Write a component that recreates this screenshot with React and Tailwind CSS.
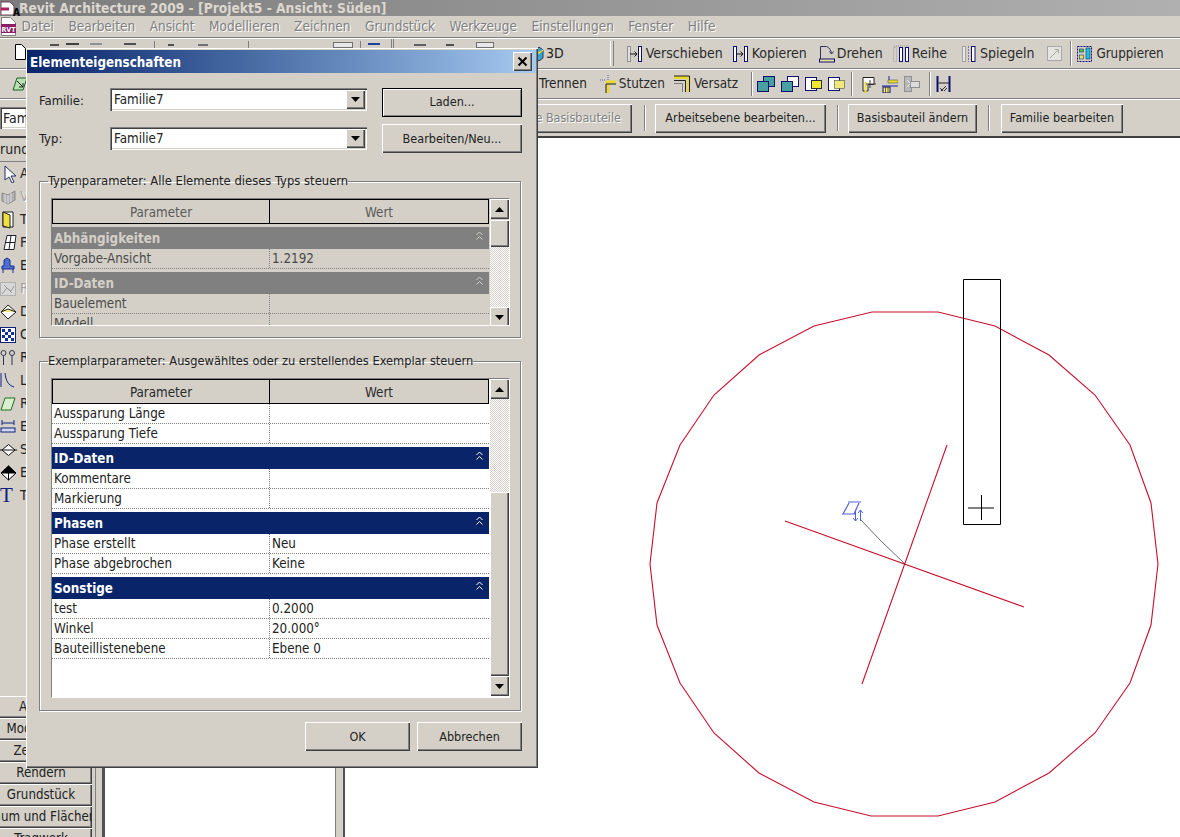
import React from 'react';

const raised = 'bg-[#d4d0c8] shadow-[inset_1px_1px_0_#fff,inset_-1px_-1px_0_#404040,inset_-2px_-2px_0_#808080]';
const sunken = 'shadow-[inset_1px_1px_0_#808080,inset_2px_2px_0_#404040,inset_-1px_-1px_0_#fff,inset_-2px_-2px_0_#d4d0c8]';
const ditherTrack = 'bg-[repeating-conic-gradient(#d4d0c8_0%_25%,#fff_0%_50%)] bg-[length:2px_2px]';

function Verschieben() {
  return (
    <svg width="15" height="18" viewBox="0 0 15 18" fill="none">
      <rect x="0.5" y="1.5" width="3" height="15" stroke="#909090" fill="#e0e0e0" />
      <rect x="11.5" y="1.5" width="3" height="15" stroke="#101070" fill="#fff" />
      <path d="M3 9h7M7.5 6.5 10 9l-2.5 2.5" stroke="#101010" />
    </svg>
  );
}

function Kopieren() {
  return (
    <svg width="15" height="18" viewBox="0 0 15 18" fill="none">
      <rect x="0.5" y="1.5" width="3" height="15" stroke="#101070" fill="#fff" />
      <rect x="11.5" y="1.5" width="3" height="15" stroke="#101070" fill="#fff" />
      <path d="M3 9h7M7.5 6.5 10 9l-2.5 2.5" stroke="#101010" />
    </svg>
  );
}

function Drehen() {
  return (
    <svg width="16" height="18" viewBox="0 0 16 18" fill="none">
      <path d="M1.5 14V1.5h6c3 1 4.500 4 5 7" stroke="#303060" />
      <path d="M10.500 6.500l2 2.500 2-2.500" stroke="#303060" />
      <rect x="0.5" y="14" width="15" height="3" fill="#e8e4a0" stroke="#101070" />
    </svg>
  );
}

function Reihe() {
  return (
    <svg width="17" height="18" viewBox="0 0 17 18" fill="none">
      <rect x="0.5" y="2.5" width="3" height="14" stroke="#a0a0a0" strokeDasharray="1 1" />
      <rect x="6.5" y="2.5" width="3" height="14" stroke="#101070" fill="#fff" />
      <rect x="12.5" y="2.5" width="3" height="14" stroke="#101070" fill="#fff" />
      <path d="M1 1h15" stroke="#909090" strokeDasharray="1 1" />
    </svg>
  );
}

function Spiegeln() {
  return (
    <svg width="14" height="18" viewBox="0 0 14 18" fill="none">
      <rect x="0.5" y="1.5" width="3" height="15" stroke="#a0a0a0" fill="#e8e8e8" />
      <path d="M6.5 1v16" stroke="#808080" strokeDasharray="2 1" />
      <rect x="9.5" y="1.5" width="3.5" height="15" stroke="#101070" fill="#fff" />
    </svg>
  );
}

function GrayBox() {
  return (
    <svg width="15" height="17" viewBox="0 0 15 17" fill="none">
      <rect x="0.5" y="1.5" width="14" height="14" stroke="#a8a8a8" fill="#e6e4de" />
      <path d="M3 13l8-8M7.5 4.500h4v4" stroke="#a8a8a8" />
    </svg>
  );
}

function Gruppieren() {
  return (
    <svg width="15" height="18" viewBox="0 0 15 18" fill="none">
      <rect x="0.5" y="1.5" width="14" height="15" stroke="#101070" strokeDasharray="2 1" />
      <rect x="9" y="3" width="4" height="11" fill="#20c0d8" stroke="#103070" strokeWidth="0.6" />
      <rect x="2.5" y="4" width="4" height="3" fill="#50c050" stroke="#103070" strokeWidth="0.6" />
      <rect x="2.5" y="10" width="4" height="4" fill="#e8e060" stroke="#103070" strokeWidth="0.6" />
    </svg>
  );
}

function Stutzen() {
  return (
    <svg width="16" height="18" viewBox="0 0 16 18" fill="none">
      <path d="M6 7h10M8 7v11" stroke="#e8d830" strokeWidth="3" />
      <path d="M0 5h6M8 0v5" stroke="#5060a0" strokeDasharray="1 1" />
      <path d="M6 9h10M6 9v9" stroke="#202020" />
    </svg>
  );
}

function Versatz() {
  return (
    <svg width="16" height="18" viewBox="0 0 16 18" fill="none">
      <path d="M0 2.500h14.500V17" stroke="#e8d830" strokeWidth="3" />
      <path d="M0 1h15.500v16M0 5.500h11.500V17" stroke="#202020" />
      <path d="M0 8.500h8.500V17" stroke="#808080" />
    </svg>
  );
}

function JoinA() {
  return (
    <svg width="18" height="18" viewBox="0 0 18 18" fill="none">
      <rect x="6.5" y="1.5" width="11" height="10" fill="#48a0a0" stroke="#101070" />
      <rect x="0.5" y="6.5" width="11" height="10" fill="#48a0a0" stroke="#101070" />
    </svg>
  );
}

function JoinB() {
  return (
    <svg width="18" height="18" viewBox="0 0 18 18" fill="none">
      <rect x="6.5" y="1.5" width="11" height="10" fill="#fff" stroke="#101070" />
      <rect x="0.5" y="6.5" width="11" height="10" fill="#48a0a0" stroke="#101070" />
    </svg>
  );
}

function Cut({ fill = '#f0e830', white }) {
  return (
    <svg width="17" height="18" viewBox="0 0 17 18" fill="none">
      <rect x="0.5" y="2.5" width="11" height="13" fill="#fff" stroke="#101070" />
      <rect x="6.5" y="5.5" width="10" height="8" fill={fill} stroke="#303030" strokeWidth={white ? 0.5 : 1} />
    </svg>
  );
}

function Corner() {
  return (
    <svg width="15" height="18" viewBox="0 0 15 18" fill="none">
      <path d="M2 16V2.500h11v7H7V16z" stroke="#202020" fill="#fff" />
      <path d="M4.500 18V7" stroke="#e8d830" strokeWidth="2" />
      <path d="M9 5v8M5 9h10" stroke="#404040" />
    </svg>
  );
}

function Ruler() {
  return (
    <svg width="16" height="18" viewBox="0 0 16 18" fill="none">
      <path d="M7 1v5" stroke="#2020a0" />
      <rect x="6" y="5" width="10" height="3" fill="#e8d830" stroke="#404040" strokeWidth="0.5" />
      <path d="M0 11h16" stroke="#2020a0" />
      <rect x="1" y="12" width="7" height="6" fill="#f0e860" stroke="#101070" />
      <path d="M3.500 12v6M6 12v6" stroke="#101070" strokeWidth="0.6" />
    </svg>
  );
}

function GrayCut() {
  return (
    <svg width="16" height="18" viewBox="0 0 16 18" fill="none">
      <rect x="0.5" y="1.5" width="7" height="15" fill="#b8b8b8" stroke="#909090" />
      <rect x="6.5" y="6.5" width="9" height="6" fill="#dcdcdc" stroke="#909090" />
      <path d="M3 5l3 3M3 12l3-3" stroke="#f0f0f0" />
    </svg>
  );
}

function Dimension() {
  return (
    <svg width="15" height="18" viewBox="0 0 15 18" fill="none">
      <path d="M1.500 1v16M13.500 1v16" stroke="#101070" strokeWidth="2" />
      <path d="M2 8h11" stroke="#202020" />
      <path d="M5 16l5-5M4 13l3 3M8 16l3-3" stroke="#303030" />
    </svg>
  );
}

function Tool({ children, letter, muted }) {
  return (
    <div className="flex h-[23px] items-center">
      <div className="flex w-[20px] justify-start">{children}</div>
      <span className={muted ? 'text-[#a0a0a0] [text-shadow:1px_1px_0_#fff]' : 'text-[#222]'}>{letter}</span>
    </div>
  );
}

function ToolItem({ icon, label, className = 'gap-[4px]' }) {
  return (
    <div className={`flex shrink-0 items-center text-[#2a2a2a] ${className}`}>
      {icon}
      <span>{label}</span>
    </div>
  );
}

function Arrow({ down }) {
  return (
    <svg width="9" height="5" viewBox="0 0 9 5">
      <path d={down ? 'M0 0h9L4.500 5z' : 'M0 5h9L4.500 0z'} fill="#000" />
    </svg>
  );
}

function ScrollButton({ down, className = '' }) {
  return (
    <div className={`flex h-[20px] shrink-0 items-center justify-center ${raised} ${className}`}>
      <Arrow down={down} />
    </div>
  );
}

function Chevrons({ color }) {
  return (
    <svg width="7" height="10" viewBox="0 0 7 10" fill="none" stroke={color}>
      <path d="M0.5 4 3.500 1l3 3M0.5 8.500l3-3 3 3" />
    </svg>
  );
}

function PropertyGrid({ dim, rows, className, scrollbar }) {
  return (
    <div className={`flex w-[459px] overflow-hidden border border-t-[#808080] border-l-[#808080] border-r-white border-b-white text-[13.3px] ${dim ? 'bg-[#d4d0c8]' : 'bg-white'} ${className}`}>
      <div className="w-[437px] shrink-0">
        <div className={`flex h-[25px] bg-[#d4d0c8] ${dim ? 'text-[#5a5a5a]' : 'text-[#2a2a2a]'}`}>
          <div className="flex w-[218px] items-center justify-center border border-black pt-[2px]">Parameter</div>
          <div className="flex flex-1 items-center justify-center border border-l-0 border-black pt-[2px]">Wert</div>
        </div>
        {rows.map((row, i) =>
          row.section ? (
            <div
              key={i}
              className={`mt-[3px] flex h-[22px] items-center justify-between pl-[2px] pr-[6px] pt-[2px] font-bold ${dim ? 'bg-[#808080] text-[#d4d0c8]' : 'bg-[#0a246a] text-white'}`}
            >
              <span>{row.section}</span>
              <span className="-mt-[7px]">
                <Chevrons color={dim ? '#d4d0c8' : '#fff'} />
              </span>
            </div>
          ) : (
            <div key={i} className={`flex h-[20px] items-center border-b border-dotted border-[#808080] ${dim ? 'text-[#4a4a4a]' : 'text-[#222]'}`}>
              <div className="flex h-full w-[218px] items-center border-r border-dotted border-[#808080] pl-[2px]">{row.name}</div>
              <div className="pl-[2px]">{row.value}</div>
            </div>
          )
        )}
      </div>
      <div className="flex w-[20px] shrink-0 flex-col pl-px">{scrollbar}</div>
    </div>
  );
}

const typeRows = [
  { section: 'Abhängigkeiten' },
  { name: 'Vorgabe-Ansicht', value: '1.2192' },
  { section: 'ID-Daten' },
  { name: 'Bauelement', value: '' },
  { name: 'Modell', value: '' },
];

const instanceRows = [
  { name: 'Aussparung Länge', value: '' },
  { name: 'Aussparung Tiefe', value: '' },
  { section: 'ID-Daten' },
  { name: 'Kommentare', value: '' },
  { name: 'Markierung', value: '' },
  { section: 'Phasen' },
  { name: 'Phase erstellt', value: 'Neu' },
  { name: 'Phase abgebrochen', value: 'Keine' },
  { section: 'Sonstige' },
  { name: 'test', value: '0.2000' },
  { name: 'Winkel', value: '20.000°' },
  { name: 'Bauteillistenebene', value: 'Ebene 0' },
];

const menu = ['Datei', 'Bearbeiten', 'Ansicht', 'Modellieren', 'Zeichnen', 'Grundstück', 'Werkzeuge', 'Einstellungen', 'Fenster', 'Hilfe'];
const tabs = ['Ansicht', 'Modellieren', 'Zeichnen', 'Rendern', 'Grundstück', 'Raum und Flächen', 'Tragwerk'];

function Combo({ value }) {
  return (
    <div className={`flex h-[23px] w-[257px] items-center justify-between bg-white pl-[4px] pr-[2px] text-[13.3px] ${sunken}`}>
      <span className="text-[#222]">{value}</span>
      <div className={`flex h-[19px] w-[19px] items-center justify-center ${raised}`}>
        <Arrow down />
      </div>
    </div>
  );
}

function Dialog() {
  return (
    <div className={`absolute left-[26px] top-[48px] flex h-[720px] w-[512px] flex-col pl-[1px] pr-[2px] pt-[2px] text-[13px] ${raised}`}>
      <div className="flex h-[23px] shrink-0 items-center justify-between bg-gradient-to-r from-[#0a246a] to-[#a6caf0] pl-[3px] pr-[4px]">
        <span className="pt-[2px] text-[13.300px] font-bold text-white">Elementeigenschaften</span>
        <div className={`flex h-[19px] w-[19px] items-center justify-center ${raised}`}>
          <svg width="11" height="11" viewBox="0 0 11 11" stroke="#000" strokeWidth="2">
            <path d="M1.500 1.500l8 8M9.500 1.500l-8 8" />
          </svg>
        </div>
      </div>

      <div className="flex flex-col pl-[12px] pt-[15px]">
        <div className="flex items-start">
          <span className="mt-[3px] w-[71px]">Familie:</span>
          <Combo value="Familie7" />
          <div className="ml-[15px] flex h-[29px] w-[140px] items-center justify-center border border-black bg-[#d4d0c8] text-[12.500px] shadow-[inset_1px_1px_0_#fff,inset_-1px_-1px_0_#808080]">Laden...</div>
        </div>
        <div className="mt-[7px] flex items-center">
          <span className="w-[71px]">Typ:</span>
          <Combo value="Familie7" />
          <div className={`ml-[15px] flex h-[29px] w-[140px] items-center justify-center pt-[2px] text-[12.500px] ${raised}`}>Bearbeiten/Neu...</div>
        </div>

        <fieldset className="mt-[20px] h-[165px] w-[482px] border border-[#808080] pl-[11px] pt-[9px] shadow-[1px_1px_0_#fff,inset_1px_1px_0_#fff]">
          <legend className="-ml-[3px] text-[12.900px] leading-[16px] text-[#222]">Typenparameter: Alle Elemente dieses Typs steuern</legend>
          <PropertyGrid
            dim
            rows={typeRows}
            className="h-[128px]"
            scrollbar={
              <>
                <ScrollButton />
                <div className={`mt-px h-[27px] shrink-0 ${raised}`} />
                <div className={`h-[60px] shrink-0 ${ditherTrack}`} />
                <ScrollButton down />
              </>
            }
          />
        </fieldset>

        <fieldset className="mt-[15px] h-[358px] w-[482px] border border-[#808080] pl-[11px] pt-[9px] shadow-[1px_1px_0_#fff,inset_1px_1px_0_#fff]">
          <legend className="-ml-[3px] text-[12.700px] leading-[16px] text-[#222]">Exemplarparameter: Ausgewähltes oder zu erstellendes Exemplar steuern</legend>
          <PropertyGrid
            rows={instanceRows}
            className="h-[320px]"
            scrollbar={
              <>
                <ScrollButton />
                <div className={`h-[93px] shrink-0 ${ditherTrack}`} />
                <div className={`h-[184px] shrink-0 ${raised}`} />
                <ScrollButton down />
              </>
            }
          />
        </fieldset>

        <div className="mt-[11px] flex w-[483px] justify-end gap-[7px] text-[12.500px]">
          <div className={`flex h-[29px] w-[105px] items-center justify-center pt-[2px] ${raised}`}>OK</div>
          <div className={`flex h-[29px] w-[105px] items-center justify-center pt-[2px] ${raised}`}>Abbrechen</div>
        </div>
      </div>
    </div>
  );
}

function Canvas() {
  return (
    <svg className="h-full w-full" viewBox="345 138 835 699" fill="none">
      <polygon
        points="872,312 938,312 995,326 1049,355 1095,395 1130,445 1151,503 1158,564 1151,625 1130,683 1095,733 1049,773 995,802 938,816 871,816 814,802 759,773 714,733 680,683 657,625 650,564 657,503 680,445 714,395 759,355 814,326"
        stroke="#c8102e"
        strokeWidth="1.1"
      />
      <path d="M785 521 1024 607M947 445 862 684" stroke="#c8102e" strokeWidth="1.1" />
      <path d="M861 520 881 541 905 564" stroke="#445" strokeWidth="0.8" />
      <path d="M963.500 279.500h37v245h-37zM968 508h26M981.500 495v25" stroke="#000" />
      <path d="M842 514h14M848 502h13M849 503l-6 11M859 503l-5 11" stroke="#5060e0" strokeWidth="1.2" />
      <path d="M855.500 510v11M853 518l2.500 3 2.500-3M860.500 521v-11M858 513l2.500-3 2.500 3" stroke="#5060e0" />
    </svg>
  );
}

export default function App() {
  return (
    <div className="relative flex h-[837px] w-[1180px] flex-col overflow-hidden bg-[#d4d0c8] font-['DejaVu_Sans_Condensed','Noto_Sans',sans-serif] text-[14px] text-[#222]">
      {/* title bar */}
      <div className="flex h-[16px] shrink-0 items-end overflow-hidden bg-gradient-to-r from-[#7c7c7c] to-[#b0b0b0]">
        <div className="relative mb-[1px] ml-[1px] h-[15px] w-[16px]">
          <svg width="16" height="15" viewBox="0 0 16 15" fill="none">
            <path d="M0 2h9l4 4v9H0z" fill="#fff" stroke="#704060" />
            <path d="M0 9h8" stroke="#b02060" strokeWidth="3" />
          </svg>
          <span className="absolute -bottom-[3px] -right-[3px] text-[10px] font-bold leading-none text-black">A</span>
        </div>
        <span className="-mb-[1px] ml-[2px] whitespace-nowrap text-[13.700px] font-bold leading-[18px] text-[#dcd8d0]">Revit Architecture 2009 - [Projekt5 - Ansicht: Süden]</span>
      </div>

      {/* menu */}
      <div className="flex h-[22px] shrink-0 items-center gap-[14.500px] border-b border-[#808080] pl-[1px] text-[13.500px]">
        <svg className="-mr-[10px]" width="16" height="19" viewBox="0 0 16 19" fill="none">
          <path d="M0.5 0.5h9l5 5v13h-14z" fill="#fff" stroke="#808080" />
          <rect x="0" y="7" width="15" height="9" fill="#8a1f6b" />
          <text x="7.500" y="14.500" textAnchor="middle" fontSize="7" fontWeight="700" fill="#fff">RVT</text>
        </svg>
        {menu.map((item) => (
          <span key={item} className="text-[#808080] [text-shadow:1px_1px_0_#fff]">{item}</span>
        ))}
      </div>

      {/* first toolbar */}
      <div className="flex h-[31px] shrink-0 items-center border-b border-t border-b-[#808080] border-t-white">
        <div className="flex h-full w-[535px] shrink-0 items-start">
          <svg className="ml-[15px] mt-[5px]" width="11" height="16" viewBox="0 0 11 16" fill="none">
            <path d="M0.5 0.5h6l4 4v11h-10z" fill="#fff" stroke="#000" />
          </svg>
          <div className="ml-[24px] mt-[5px] h-[2px] w-[9px] bg-[#505050]" />
          <div className="ml-[7px] mt-[4px] h-[3px] w-[13px] border-t-2 border-[#404040]" />
          <div className="ml-[11px] mt-[4px] h-[3px] w-[12px] border-t-2 border-[#909090]" />
          <div className="ml-[22px] mt-[4px] h-[3px] w-[12px] border-t-2 border-[#505050]" />
          <div className="ml-[18px] mt-[2px] h-[7px] w-px bg-[#808080]" />
          <div className="ml-[13px] mt-[5px] h-[2px] w-[6px] bg-[#505050]" />
          <div className="ml-[24px] mt-[5px] h-[2px] w-[10px] bg-[#707070]" />
          <div className="ml-[40px] mt-[2px] h-[7px] w-px bg-[#808080]" />
          <div className="ml-[84px] mt-[3px] h-[6px] w-[20px] border border-[#707070] bg-[#e8e8e8]" />
          <div className="ml-[7px] mt-[2px] h-[7px] w-px bg-[#808080]" />
          <div className="ml-[7px] mt-[4px] h-[3px] w-[12px] border-t-2 border-[#2040a0]" />
          <div className="ml-[11px] mt-[0px] h-[9px] w-[3px] border-x border-[#808080]" />
          <div className="ml-[20px] mt-[5px] h-[2px] w-[12px] bg-[#606060]" />
          <div className="ml-[20px] mt-[5px] h-[2px] w-[8px] bg-[#505050]" />
          <div className="ml-[22px] mt-[3px] h-[6px] w-[18px] border border-[#707070] bg-[#e8e8e8]" />
        </div>
        <svg className="-ml-[1px]" width="10" height="18" viewBox="0 0 10 18" fill="none">
          <path d="M1 6l4-4 4 3v8l-4 3-4-3z" fill="#30a8d0" stroke="#303060" />
          <path d="M1 6l4 2 4-3" stroke="#e8d830" strokeWidth="1.500" />
        </svg>
        <span className="ml-[2px]">3D</span>
        <div className="ml-[46px] h-[25px] w-[4px] border-x border-l-white border-r-[#808080]" />
        <ToolItem className="ml-[13px] gap-[4px]" icon={<Verschieben />} label="Verschieben" />
        <ToolItem className="ml-[10px] gap-[4px]" icon={<Kopieren />} label="Kopieren" />
        <ToolItem className="ml-[12px] gap-[2px]" icon={<Drehen />} label="Drehen" />
        <ToolItem className="ml-[10px] gap-[2px]" icon={<Reihe />} label="Reihe" />
        <ToolItem className="ml-[15px] gap-[4px]" icon={<Spiegeln />} label="Spiegeln" />
        <div className="ml-[13px] shrink-0"><GrayBox /></div>
        <div className="ml-[8px] h-[25px] w-[2px] shrink-0 border-x border-l-[#808080] border-r-white" />
        <ToolItem className="ml-[5px] gap-[4px] text-[13.300px]" icon={<Gruppieren />} label="Gruppieren" />
      </div>

      {/* second toolbar */}
      <div className="flex h-[30px] shrink-0 items-center border-b border-t border-b-[#808080] border-t-white text-[13.400px]">
        <div className="flex w-[539px] shrink-0 items-center">
          <svg className="ml-[12px]" width="16" height="16" viewBox="0 0 16 16" fill="none">
            <path d="M1 14 5 2h10l-4 12z" fill="#b8e0b0" stroke="#206020" />
            <path d="M5 5l6 6M11 7v4H7" stroke="#202020" />
          </svg>
        </div>
        <span>Trennen</span>
        <ToolItem className="ml-[13px] gap-[3px]" icon={<Stutzen />} label="Stutzen" />
        <ToolItem className="ml-[9px] gap-[4px]" icon={<Versatz />} label="Versatz" />
        <div className="ml-[13px] h-[24px] w-[2px] border-x border-l-[#808080] border-r-white" />
        <div className="ml-[4px] flex shrink-0 items-center gap-[6px]">
          <JoinA />
          <JoinB />
          <Cut />
          <Cut fill="#f0e878" white />
        </div>
        <div className="ml-[6px] h-[24px] w-[2px] border-x border-l-[#808080] border-r-white" />
        <div className="ml-[8px] flex shrink-0 items-center gap-[6px]">
          <Corner />
          <Ruler />
          <GrayCut />
        </div>
        <div className="ml-[9px] h-[24px] w-[2px] border-x border-l-[#808080] border-r-white" />
        <div className="ml-[5px] shrink-0"><Dimension /></div>
      </div>

      {/* third toolbar */}
      <div className="flex h-[39px] shrink-0 items-center border-b-2 border-t border-b-[#404040] border-t-white text-[12.500px]">
        <div className={`flex h-[22px] w-[27px] shrink-0 items-center overflow-hidden bg-white pl-[3px] text-[14px] ${sunken}`}>Fam</div>
        <div className={`ml-[473px] flex h-[29px] w-[132px] shrink-0 items-center justify-end pr-[11px] text-[#808080] [text-shadow:1px_1px_0_#fff] ${raised}`}>e Basisbauteile</div>
        <div className="ml-[12px] h-[26px] w-[2px] border-x border-l-[#808080] border-r-white" />
        <div className={`ml-[9px] flex h-[29px] w-[171px] items-center justify-center ${raised}`}>Arbeitsebene bearbeiten...</div>
        <div className="ml-[11px] h-[26px] w-[2px] border-x border-l-[#808080] border-r-white" />
        <div className={`ml-[9px] flex h-[29px] w-[129px] items-center justify-center ${raised}`}>Basisbauteil ändern</div>
        <div className="ml-[11px] h-[26px] w-[2px] border-x border-l-[#808080] border-r-white" />
        <div className={`ml-[11px] flex h-[29px] w-[122px] items-center justify-center ${raised}`}>Familie bearbeiten</div>
      </div>

      {/* work area */}
      <div className="flex min-h-0 flex-1">
        <div className="w-[92px] shrink-0 overflow-hidden">
          <div className="flex h-[24px] items-center border-b border-[#808080]">rund</div>
          <Tool letter="A">
            <svg width="14" height="18" viewBox="0 0 14 18" className="ml-[4px]" fill="#fff" stroke="#203060">
              <path d="M1 1l11 10H7l3 6-2 1-3-6-4 3z" />
            </svg>
          </Tool>
          <Tool letter="V" muted>
            <svg width="15" height="16" viewBox="0 0 15 16" className="ml-[1px]" fill="#b0b0b0" stroke="#888">
              <path d="M1 4l6 2 7-4v9l-7 4-6-3z" />
              <path d="M4 5v9M7 6v9M10 4v9" stroke="#e0e0e0" />
            </svg>
          </Tool>
          <Tool letter="T">
            <svg width="12" height="18" viewBox="0 0 12 18" className="ml-[2px]" stroke="#202020">
              <path d="M1 1h10v15H1z" fill="#fff" />
              <path d="M1 1l7 3v13l-7-2z" fill="#f0e040" />
            </svg>
          </Tool>
          <Tool letter="F">
            <svg width="14" height="17" viewBox="0 0 14 17" className="ml-[3px]" fill="#fff" stroke="#202030">
              <path d="M4 1.500h9l-2 14H1z" />
              <path d="M8 1.500 6 15.500M2.500 8.500h9.500" />
            </svg>
          </Tool>
          <Tool letter="E">
            <svg width="16" height="17" viewBox="0 0 16 17" fill="none" stroke="#1a2a90">
              <path d="M4 9V3l3-2 3 2v6h4v3H2V9z" fill="#5070d0" />
              <path d="M3 12v4M13 12v4" />
            </svg>
          </Tool>
          <Tool letter="R" muted>
            <svg width="16" height="16" viewBox="0 0 16 16" fill="#d8d8d8" stroke="#b0b0b0">
              <rect x="0.5" y="1.5" width="15" height="13" />
              <path d="M2 13l5-6 4 3 3-5M4 4l8 8" stroke="#9a9a9a" />
            </svg>
          </Tool>
          <Tool letter="D">
            <svg width="17" height="16" viewBox="0 0 17 16" fill="#fff" stroke="#202020">
              <path d="M1 8l7-7 8 7-8 7z" />
              <path d="M1 8l7-3 8 3" fill="#f0e880" />
            </svg>
          </Tool>
          <Tool letter="C">
            <svg width="16" height="16" viewBox="0 0 16 16">
              <rect x="0.5" y="0.5" width="15" height="15" fill="#fff" stroke="#102080" />
              <path d="M2 2h3v3H2zM8 2h3v3H8zM5 5h3v3H5zM11 5h3v3h-3zM2 8h3v3H2zM8 8h3v3H8zM5 11h3v3H5zM11 11h3v3h-3z" fill="#1030a0" />
            </svg>
          </Tool>
          <Tool letter="R">
            <svg width="16" height="17" viewBox="0 0 16 17" fill="none" stroke="#303050">
              <circle cx="3.500" cy="4" r="2.500" />
              <circle cx="12" cy="4" r="2.500" />
              <path d="M3.500 7v9M12 7v9" />
            </svg>
          </Tool>
          <Tool letter="L">
            <svg width="16" height="17" viewBox="0 0 16 17" fill="none" stroke="#102080" className="-ml-[1px]">
              <path d="M2 1v14M6 1c1 8 3 12 9 14" />
            </svg>
          </Tool>
          <Tool letter="R">
            <svg width="16" height="14" viewBox="0 0 16 14" stroke="#207020" fill="#d8f0d0">
              <path d="M1 13 5 1h10l-4 12z" />
            </svg>
          </Tool>
          <Tool letter="E">
            <svg width="16" height="15" viewBox="0 0 16 15" fill="none" stroke="#102080">
              <path d="M2 1v5M14 1v5M2 4h12" />
              <rect x="1" y="9" width="14" height="4" fill="#d0d8f0" />
            </svg>
          </Tool>
          <Tool letter="S">
            <svg width="17" height="14" viewBox="0 0 17 14" fill="#fff" stroke="#101010">
              <path d="M2 7l6.500-5.500L15 7l-6.500 5.500z" />
              <path d="M0 7h17" />
            </svg>
          </Tool>
          <Tool letter="E">
            <svg width="17" height="16" viewBox="0 0 17 16">
              <path d="M1 8l7.500-7L16 8l-7.500 7z" fill="#fff" stroke="#000" />
              <path d="M8.500 1 16 8H1zM8.500 15V8" fill="#000" stroke="#000" />
            </svg>
          </Tool>
          <Tool letter="T">
            <span className="font-['Liberation_Serif',serif] text-[21px] leading-none text-[#102080]">T</span>
          </Tool>
          <div className="mt-[189px] text-[13.200px]">
            {tabs.map((tab) => (
              <div key={tab} className={`-ml-[10px] flex h-[22px] w-[102px] items-center justify-center whitespace-nowrap ${raised}`}>{tab}</div>
            ))}
          </div>
        </div>
        <div className="ml-[3px] w-[10px] shrink-0 border-l border-r-[3px] border-l-[#808080] border-r-[#505050]" />
        <div className="w-[230px] shrink-0 bg-white" />
        <div className="w-[10px] shrink-0 border-l border-r-[2px] border-l-[#808080] border-r-[#505050]" />
        <div className="min-w-0 flex-1 bg-white">
          <Canvas />
        </div>
      </div>

      <Dialog />
    </div>
  );
}
